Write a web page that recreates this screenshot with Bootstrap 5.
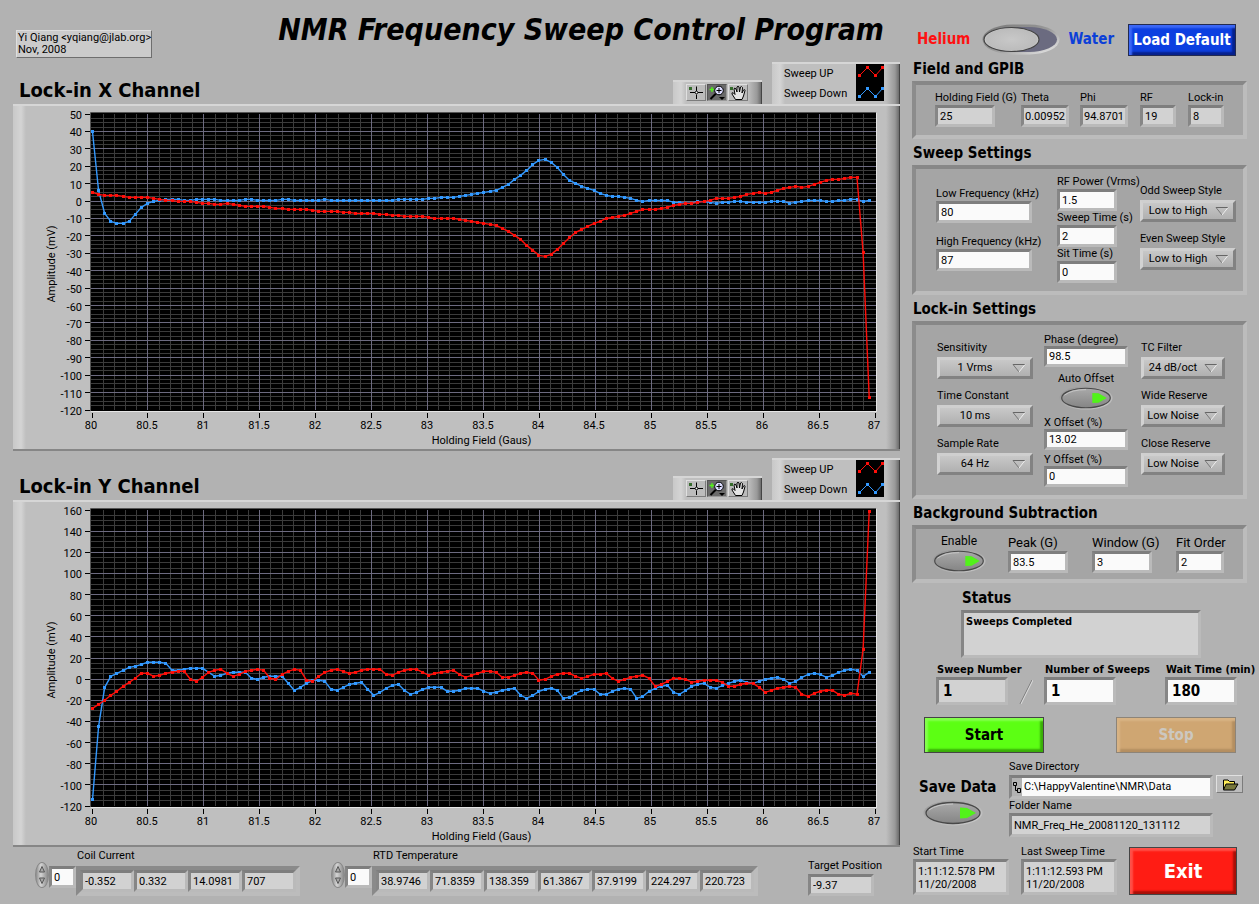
<!DOCTYPE html>
<html lang="en">
<head>
<meta charset="utf-8">
<meta name="viewport" content="width=device-width, initial-scale=1">
<title>NMR Frequency Sweep Control Program</title>
<link href="https://cdn.jsdelivr.net/npm/bootstrap@5.3.0/dist/css/bootstrap.min.css" rel="stylesheet">
<style>
:root{--face:#b2b2b2;--well:#a5a5a5;--read:#d2d2d2;--lite:#bababa;--ui:Roboto,"Liberation Sans",sans-serif;--strong:"DejaVu Sans Condensed","DejaVu Sans",sans-serif}
body{background:var(--face);color:#000;font:11px/14px var(--ui)}
label,.cap{display:block;line-height:14px;white-space:nowrap}
h1,h2,h3{font-family:var(--strong);font-weight:700;margin:0;white-space:nowrap}
h1{font-size:30px;font-style:italic;line-height:36px}
h2{font-size:20px;line-height:28px;padding-left:6px}
h3{font-size:15px;line-height:20px;padding:4px 0 2px 1px}
.strong{font-family:var(--strong);font-weight:700}
.strong15{font-size:15px;line-height:20px}
.left-pane{padding:0 12px 0 13px}
.side{flex:0 0 347px}
.author{border:1px solid;border-color:#dedede #6e6e6e #6e6e6e #dedede;background:#cbcbcb;line-height:12px;padding:1px 0 1px 1px;margin:30px 0 0 3px;white-space:nowrap}

/* recessed controls and indicators */
.sunk{display:block;border:3px solid;border-color:#7e7e7e var(--lite) var(--lite) #868686;background:#fafafa;color:#000;font:11px/14px var(--ui);padding:0 2px;height:22px;border-radius:0;outline:0}
.sunk[readonly],.readout{background:var(--read)}
.big{font:700 15px/20px var(--strong);height:28px;padding:0 4px}
.well{border:4px solid;border-color:#878787 #bcbcbc #bcbcbc #8c8c8c;background:var(--well);margin-right:12px}
.w36{width:36px}.w48{width:48px}.w60{width:60px}.w72{width:72px}.w84{width:84px}.w96{width:96px}
.drop{display:block;appearance:none;border:3px solid;border-color:#cfcfcf #828282 #828282 #d2d2d2;border-radius:0;height:22px;margin-top:2px;font:11px/14px var(--ui);padding:0 20px 0 0;text-align:center;text-align-last:center;color:#000;
 background:url("data:image/svg+xml,%3Csvg xmlns='http://www.w3.org/2000/svg' width='14' height='10'%3E%3Cpath d='M1 1.5H13' stroke='%23666'/%3E%3Cpath d='M1 1.5L7 9' stroke='%23777' fill='none'/%3E%3Cpath d='M13 1.5L7 9' stroke='%23eee' fill='none'/%3E%3C/svg%3E") right 4px center no-repeat,linear-gradient(#c8c8c8,#b0b0b0)}
.led{appearance:none;display:block;width:60px;height:28px;margin:0;
 background:url("data:image/svg+xml,%3Csvg xmlns='http://www.w3.org/2000/svg' viewBox='0 0 60 28' preserveAspectRatio='none'%3E%3Cdefs%3E%3ClinearGradient id='g' x1='0' y1='0' x2='1' y2='1'%3E%3Cstop offset='0' stop-color='%23888'/%3E%3Cstop offset='1' stop-color='%23ddd'/%3E%3C/linearGradient%3E%3ClinearGradient id='f' x1='0' y1='0' x2='0' y2='1'%3E%3Cstop offset='0' stop-color='%23a9a9a9'/%3E%3Cstop offset='1' stop-color='%23858585'/%3E%3C/linearGradient%3E%3C/defs%3E%3Cellipse cx='30' cy='14' rx='29.5' ry='12.5' fill='url(%23g)' opacity='.65'/%3E%3Cellipse cx='30' cy='14' rx='27' ry='10.5' fill='url(%23f)' stroke='%23484848' stroke-width='1.3'/%3E%3Cpath d='M6 11Q14 5 30 5' fill='none' stroke='%23c8c8c8'/%3E%3Cpath d='M37 8.500L44 9L53 14L44 19L37 19.500Z' fill='%2352f21a'/%3E%3C/svg%3E") center/100% 100% no-repeat}
.led-sm{width:54px;height:26px}
.gas{appearance:none;display:block;width:78px;height:32px;margin:0 8px 0 12px;
 background:url("data:image/svg+xml,%3Csvg xmlns='http://www.w3.org/2000/svg' width='78' height='32'%3E%3Cdefs%3E%3ClinearGradient id='r' x1='0' y1='0' x2='1' y2='1'%3E%3Cstop offset='0' stop-color='%23777'/%3E%3Cstop offset='.5' stop-color='%23999'/%3E%3Cstop offset='1' stop-color='%23f0f0f0'/%3E%3C/linearGradient%3E%3CradialGradient id='k' cx='.5' cy='.5' r='.6'%3E%3Cstop offset='0' stop-color='%23c8c8c8'/%3E%3Cstop offset='.75' stop-color='%23bcbcbc'/%3E%3Cstop offset='1' stop-color='%23eee'/%3E%3C/radialGradient%3E%3C/defs%3E%3Crect x='.5' y='.5' width='77' height='30' rx='30' ry='15' fill='url(%23r)'/%3E%3Crect x='3' y='3' width='72' height='25' rx='28' ry='12.5' fill='%236b6b80'/%3E%3Cellipse cx='29.500' cy='15.500' rx='27.500' ry='12' fill='url(%23k)' stroke='%23444' stroke-width='1.200'/%3E%3C/svg%3E") no-repeat}
.push{border:1px solid #444;border-radius:0;font:700 15px/20px var(--strong);width:120px;height:36px;padding:0;white-space:nowrap}
.push-blue{width:108px;height:32px;color:#fff;border-color:#222a50;background:#0c3fe0;box-shadow:inset 3px 3px 2px #3c68f6,inset -3px -3px 2px #06208c}
.push-green{background:#5cff13;box-shadow:inset 3px 3px 2px #84ff4c,inset -3px -3px 2px #3aae08}
.push-tan,.push-tan:disabled{color:#ccc8c0;border-color:#8d8478;background:#cfa672;opacity:1;box-shadow:inset 3px 3px 2px #d8b384,inset -3px -3px 2px #b48e60}
.push-red{width:108px;height:48px;font-size:20px;color:#fff;background:#ff1c14;margin-top:2px;box-shadow:inset 3px 3px 2px #ff5048,inset -3px -3px 2px #a81008}

/* raised plates: graphs, legends, tool palettes */
.plate{border-top:2px solid #d6d6d6;border-bottom:2px solid #868686;background:linear-gradient(90deg,#c8c8c8,#d4d4d4 8px,#bfbfbf 13px,#bfbfbf calc(100% - 14px),#999 calc(100% - 5px),#6c6c6c calc(100% - 1px),#444 calc(100% - 1px))}
.tab{border-bottom:0}
.graph{height:347px}
.graph svg{display:block;width:100%;height:343px}
.chan{margin-bottom:7px}
.chan:last-of-type{margin-bottom:0}
.palette{width:89px;height:24px;padding:2px 0 0 13px;margin-right:10px;gap:1px}
.legend{width:128px;height:42px;padding:0 16px 0 12px;justify-content:space-between}
.legend .names{line-height:20px}
.keys{background:#000}
.tool{width:20px;height:17px;padding:0;border:1px solid;border-color:#e0e0e0 #7c7c7c #7c7c7c #e0e0e0;background:#bcbcbc;border-radius:0;display:block}
.tool svg{display:block;width:18px;height:15px}
.tool-on{background:#6a6a6a;border-color:#555 #999 #999 #555}

/* indexed arrays under the graphs */
.array-row{padding:2px 0 0 22px}
.bank{margin-right:31px}
.bank .cap{padding-left:1px;margin-bottom:3px}
.cells{border:4px solid;border-color:#8a8a8a #bcbcbc #bcbcbc #8a8a8a;background:#aaa}
.cells .sunk{width:54px}
.idx{width:27px;margin-top:17px}
.spin{width:14px;height:26px;margin-top:13px;border-radius:50%;background:linear-gradient(90deg,#8c8c8c,#d4d4d4 40%,#888);border:1px solid #888}
.spin button{display:block;width:12px;height:12px;border:0;padding:0;background:none}
.spin svg{display:block;margin:auto}
.target{padding:10px 18px 0 0}
.target .sunk{width:66px;margin-top:1px}

/* control column */
.top-row{padding:24px 23px 0 5px;height:55px}
.top-row .strong15{line-height:30px}
.text-helium{color:#ff1010}
.text-water{color:#0b3fd8}
.field-grid{display:grid;grid-template-columns:86px 59px 60px 48px 40px;padding:6px 0 0 19px;height:58px}
.tightpad{padding:0 1px}
.sweep-grid{display:grid;grid-template-columns:121px 83px 96px;padding-left:20px;height:130px}
.col-a{padding-top:18px;gap:12px}
.col-b{padding-top:6px}
.col-c{padding-top:15px;gap:10px}
.lock-grid{display:grid;grid-template-columns:107px 97px 84px;padding-left:21px;height:178px}
.stack{padding-top:16px;gap:10px}
.lock-mid{padding-top:9px}
.lock-mid label{line-height:12px}
.lock-mid .sunk{height:21px}
.auto{width:84px;padding:6px 0}
.auto label{text-align:center}
.auto .led{margin:0 auto}
.back-grid{display:grid;grid-template-columns:76px 84px 84px 48px;padding:6px 0 0 16px;height:58px}
.back-grid label{line-height:16px;font-size:13px}
.back-grid .enable{font-size:12px;width:54px;text-align:center;line-height:13px}
.status{padding:1px 0 0 49px}
.status-box{width:240px;height:48px;padding-top:2px;font-family:var(--strong);font-weight:700}
.counts{display:grid;grid-template-columns:83px 25px 121px 90px;padding:5px 0 0 24px}
.counts label{padding-left:1px}
.run-row{padding:12px 0 7px 12px;gap:72px}
.save-left{width:97px;padding:17px 0 0 7px}
.save-left .led{margin:2px 0 0 4px}
.save-dir{margin-bottom:1px}
.path{width:204px;height:24px;margin-right:3px}
.path input{border:0;font:inherit;flex:1 1 auto;min-width:0;padding:0 2px;background:#fafafa;align-self:stretch;outline:0}
.path-box{background:var(--face);padding:0}
.browse{width:27px;height:18px}
.browse svg{margin:auto}
.time-row{padding:8px 0 0 1px;gap:12px}
.stamp{width:96px;height:36px;line-height:13px;padding-top:3px}
</style>
</head>
<body>
<svg width="0" height="0" class="position-absolute" aria-hidden="true">
  <symbol id="cross" viewBox="0 0 18 15"><rect x="2" y="2" width="3" height="3" fill="#356b2c"/><path d="M9.500 1.500V6M9.500 9.500V14M3 7.500H8M11 7.500H16" stroke="#000"/><circle cx="9.500" cy="7.500" r="1.300" fill="#fff" stroke="#000"/></symbol>
  <symbol id="lens" viewBox="0 0 18 15"><path d="M1.500 4.500H6.500M4 2V7" stroke="#52f21a" stroke-width="1.300"/><path d="M8 8.500L2.500 14" stroke="#000" stroke-width="2"/><circle cx="11" cy="5.500" r="4.300" fill="#dcdcff" stroke="#000"/><path d="M8.500 5.500H13.500M11 3V8" stroke="#000"/><path d="M11 12H17L14 15Z" fill="#000"/></symbol>
  <symbol id="hand" viewBox="0 0 18 15"><rect x="1" y="2" width="3" height="3" fill="#356b2c"/><path d="M6.500 14.500L3 9Q2.500 7 4.500 8L6 9.500L5 4Q5.500 2 7 4L8 7L8 2Q9 .5 10 2L10.500 7L11.500 2Q12.500 1 13.500 2.500L13 8L14.500 5Q16 4 16 5.500L14.500 11L13 14.500Z" fill="#e4e4e4" stroke="#000"/></symbol>
  <symbol id="folder" viewBox="0 0 18 14"><path d="M2.500 12V2.500H7L8.500 4H13.500V6.500" fill="#ffee58" stroke="#000"/><path d="M2.500 12.500L5 6.500H17L13.500 12.500Z" fill="#77773c" stroke="#000"/></symbol>
</svg>

<div class="d-flex align-items-start">
  <main class="flex-grow-1 left-pane">
    <header class="d-flex justify-content-between align-items-start" style="height:62px">
      <div class="author">Yi Qiang &lt;yqiang@jlab.org&gt;<br>Nov, 2008</div>
      <h1 class="pt-2 mt-1 pe-3">NMR Frequency Sweep Control Program</h1>
    </header>

    <section class="chan" data-channel="x">
      <div class="d-flex align-items-end">
        <h2 class="flex-grow-1">Lock-in X Channel</h2>
        <div class="plate tab palette d-flex"></div>
        <div class="plate tab legend d-flex"></div>
      </div>
      <div class="plate graph"><svg role="img" aria-label="Lock-in X amplitude"></svg></div>
    </section>
    <section class="chan" data-channel="y">
      <div class="d-flex align-items-end">
        <h2 class="flex-grow-1">Lock-in Y Channel</h2>
        <div class="plate tab palette d-flex"></div>
        <div class="plate tab legend d-flex"></div>
      </div>
      <div class="plate graph"><svg role="img" aria-label="Lock-in Y amplitude"></svg></div>
    </section>

    <footer class="d-flex array-row">
      <div class="d-flex bank" data-name="Coil Current" data-values="-0.352 0.332 14.0981 707"></div>
      <div class="d-flex bank" data-name="RTD Temperature" data-values="38.9746 71.8359 138.359 61.3867 37.9199 224.297 220.723"></div>
      <div class="ms-auto target"><label for="tp">Target Position</label><input id="tp" class="sunk" readonly value="-9.37"></div>
    </footer>
  </main>

  <aside class="side">
    <div class="d-flex top-row">
      <label class="strong strong15 text-helium" for="gas">Helium</label>
      <input type="checkbox" role="switch" id="gas" class="gas">
      <span class="strong strong15 text-water">Water</span>
      <button class="push push-blue ms-auto">Load Default</button>
    </div>

    <h3>Field and GPIB</h3>
    <div class="well field-grid">
      <div><label for="hf">Holding Field (G)</label><input id="hf" class="sunk w60" readonly value="25"></div>
      <div><label for="th">Theta</label><input id="th" class="sunk w48 tightpad" readonly value="0.00952"></div>
      <div><label for="ph">Phi</label><input id="ph" class="sunk w48 tightpad" readonly value="94.8701"></div>
      <div><label for="rf">RF</label><input id="rf" class="sunk w36" readonly value="19"></div>
      <div><label for="li">Lock-in</label><input id="li" class="sunk w36" readonly value="8"></div>
    </div>

    <h3>Sweep Settings</h3>
    <div class="well sweep-grid">
      <div class="d-flex flex-column col-a">
        <div><label for="lf">Low Frequency (kHz)</label><input id="lf" class="sunk w96" value="80"></div>
        <div><label for="hi">High Frequency (kHz)</label><input id="hi" class="sunk w96" value="87"></div>
      </div>
      <div class="col-b">
        <label for="rp">RF Power (Vrms)</label><input id="rp" class="sunk w60" value="1.5">
        <label for="st">Sweep Time (s)</label><input id="st" class="sunk w60" value="2">
        <label for="si">Sit Time (s)</label><input id="si" class="sunk w60" value="0">
      </div>
      <div class="d-flex flex-column col-c">
        <div><label for="od">Odd Sweep Style</label><select id="od" class="drop w96"><option>Low to High</option></select></div>
        <div><label for="ev">Even Sweep Style</label><select id="ev" class="drop w96"><option>Low to High</option></select></div>
      </div>
    </div>

    <h3>Lock-in Settings</h3>
    <div class="well lock-grid">
      <div class="d-flex flex-column stack">
        <div><label for="se">Sensitivity</label><select id="se" class="drop w96"><option>1 Vrms</option></select></div>
        <div><label for="tc">Time Constant</label><select id="tc" class="drop w96"><option>10 ms</option></select></div>
        <div><label for="sr">Sample Rate</label><select id="sr" class="drop w96"><option>64 Hz</option></select></div>
      </div>
      <div class="lock-mid">
        <label for="pd">Phase (degree)</label><input id="pd" class="sunk w84" value="98.5">
        <div class="auto"><label for="ao">Auto Offset</label><input type="checkbox" id="ao" class="led led-sm" checked></div>
        <label for="xo">X Offset (%)</label><input id="xo" class="sunk w84" value="13.02">
        <label for="yo" class="mt-1">Y Offset (%)</label><input id="yo" class="sunk w84" value="0">
      </div>
      <div class="d-flex flex-column stack">
        <div><label for="tf">TC Filter</label><select id="tf" class="drop w84"><option>24 dB/oct</option></select></div>
        <div><label for="wr">Wide Reserve</label><select id="wr" class="drop w84"><option>Low Noise</option></select></div>
        <div><label for="cr">Close Reserve</label><select id="cr" class="drop w84"><option>Low Noise</option></select></div>
      </div>
    </div>

    <h3>Background Subtraction</h3>
    <div class="well back-grid">
      <div><label for="en" class="enable">Enable</label><input type="checkbox" id="en" class="led led-sm" checked></div>
      <div><label for="pk">Peak (G)</label><input id="pk" class="sunk w60" value="83.5"></div>
      <div><label for="wi">Window (G)</label><input id="wi" class="sunk w60" value="3"></div>
      <div><label for="fo">Fit Order</label><input id="fo" class="sunk w48" value="2"></div>
    </div>

    <div class="status">
      <h3>Status</h3>
      <div class="sunk readout status-box">Sweeps Completed</div>
    </div>

    <div class="counts">
      <div><label class="strong" for="sn">Sweep Number</label><input id="sn" class="sunk big w72" readonly value="1"></div>
      <svg width="14" height="28" viewBox="0 0 14 28" class="align-self-end" aria-hidden="true"><path d="M1 27L13 3" stroke="#777"/><path d="M2 27L14 3" stroke="#ddd"/></svg>
      <div><label class="strong" for="ns">Number of Sweeps</label><input id="ns" class="sunk big w72" value="1"></div>
      <div><label class="strong" for="wt">Wait Time (min)</label><input id="wt" class="sunk big w72" value="180"></div>
    </div>

    <div class="d-flex run-row">
      <button class="push push-green">Start</button>
      <button class="push push-tan" disabled>Stop</button>
    </div>

    <div class="d-flex save-row">
      <div class="save-left"><label class="strong strong15" for="sd">Save Data</label><input type="checkbox" id="sd" class="led" checked></div>
      <div>
        <label class="save-dir" for="dir">Save Directory</label>
        <div class="d-flex align-items-start">
          <div class="sunk path path-box d-flex align-items-center">
            <svg width="10" height="16" viewBox="0 0 10 16" aria-hidden="true"><path d="M1.500 3.500H4.500V6.500H1.500ZM3.500 7V11.500H5M5.500 9.500H8.500V13.500H5.500Z" fill="none" stroke="#000"/></svg>
            <input id="dir" value="C:\HappyValentine\NMR\Data">
          </div>
          <button class="tool browse" aria-label="Browse"><svg><use href="#folder"/></svg></button>
        </div>
        <label for="fn">Folder Name</label>
        <input id="fn" class="sunk path" readonly value="NMR_Freq_He_20081120_131112">
      </div>
    </div>

    <div class="d-flex align-items-start time-row">
      <div><div class="cap">Start Time</div><div class="sunk readout stamp">1:11:12.578 PM<br>11/20/2008</div></div>
      <div><div class="cap">Last Sweep Time</div><div class="sunk readout stamp">1:11:12.593 PM<br>11/20/2008</div></div>
      <button class="push push-red">Exit</button>
    </div>
  </aside>
</div>

<script src="https://cdn.jsdelivr.net/npm/bootstrap@5.3.0/dist/js/bootstrap.bundle.min.js"></script>
<script>
const channels = {
  x: { zero: 604.5, gain: 5.224, min: -120, max: 50, major: 10, minor: 2.5,
    down: [395,572,640,664,670,670,664,643,622,610,604,600,598,598,598,601,601,598,598,598,598,601,601,601,601,598,598,601,601,601,601,598,598,601,601,601,601,601,598,601,601,601,601,601,601,601,601,601,601,601,598,598,598,598,598,595,595,592,592,
      592,589,586,583,580,577,574,571,562,553,538,526,511,493,481,478,487,502,523,541,550,559,565,571,580,586,589,589,592,595,601,604,601,601,601,601,607,608,609,609,604,605,607,610,607,607,604,604,607,607,607,607,604,604,604,610,607,604,601,601,601,604,604,601,601,598,598,604,601],
    up: [577,583,586,586,586,589,592,592,592,592,595,598,601,601,604,604,604,607,610,610,613,613,610,613,616,619,619,619,619,622,625,625,628,628,628,628,631,634,634,634,634,637,637,640,640,640,640,643,643,646,646,649,649,649,649,652,655,655,655,
      655,658,661,664,667,670,673,676,685,694,706,718,736,751,766,769,763,748,730,712,697,688,679,670,664,655,652,649,646,640,634,628,628,628,625,622,616,613,610,610,607,604,601,595,595,595,592,589,583,580,577,580,577,571,565,562,559,562,559,553,547,541,538,538,535,532,532,757,1192] },
  y: { zero: 119, gain: 3.171, min: -120, max: 160, major: 20, minor: 5,
    down: [479,259,142,109,100,91,82,79,73,67,67,67,70,91,91,88,85,85,85,97,109,106,100,97,97,97,115,118,112,109,109,109,130,151,142,130,121,121,124,148,151,142,133,130,127,148,166,157,145,136,133,151,163,157,148,142,142,142,154,
      154,151,145,145,145,154,160,157,151,148,145,166,175,166,154,148,145,151,175,172,160,151,148,148,163,163,154,148,145,148,175,169,154,145,139,136,157,163,151,139,133,130,142,145,136,130,124,121,127,130,124,118,115,112,118,130,124,112,103,100,103,112,106,97,91,88,91,109,97],
    up: [205,193,181,166,154,139,127,115,100,100,109,106,100,97,94,94,118,124,112,97,91,88,100,109,103,94,91,88,91,115,118,103,94,88,91,121,124,109,97,91,88,94,100,97,91,88,88,88,103,106,97,91,88,88,97,106,100,97,94,
      91,103,112,106,100,94,94,97,112,112,106,100,97,100,121,118,109,103,100,100,109,115,109,103,103,100,115,124,118,112,109,106,115,139,133,124,115,115,118,127,124,121,121,121,127,139,139,133,130,130,142,157,151,145,142,139,142,163,169,160,154,151,151,163,166,160,163,28,-386] }
};

function draw(svg, c) {
  const W = svg.clientWidth, L = 79, R = W - 25, T = 8, B = 304, px = v => Math.floor(v) + 0.5;
  const X = v => L + (v - 80) / 7 * (R - L), Y = v => B - (v - c.min) / (c.max - c.min) * (B - T);
  let minor = '', major = '', ticks = '', s = '';
  for (let i = 1; i < 70; i++) { const d = `M${px(X(80 + i / 10))} ${T}V${B}`; if (i % 5) minor += d; else major += d; }
  for (let v = c.min, n = 0; v <= c.max; v += c.minor, n++) {
    const d = `M${L - 1} ${px(Y(v))}H${R + 1}`;
    if (n % 4) minor += d;
    else {
      if (v > c.min && v < c.max) major += d;
      ticks += `M${L - 7} ${px(Y(v))}h5`;
      s += `<text x="${L - 10}" y="${Math.round(Y(v)) + 5}" text-anchor="end">${v}</text>`;
    }
  }
  for (let v = 80; v <= 87; v += 0.5) {
    ticks += `M${px(X(v))} ${B + 3}v5`;
    s += `<text x="${Math.round(X(v)) - 1}" y="${B + 19}" text-anchor="middle">${v}</text>`;
  }
  const series = (data, col) => {
    const pts = data.map((r, i) => [X(80 + i * 6.944 / 127) + .5, Y((c.zero - r) / c.gain) + .5]);
    return `<polyline points="${pts.map(p => p.map(n => n.toFixed(1)).join()).join(' ')}" fill="none" stroke="${col}" stroke-width="1.4"/>` +
      `<path d="${pts.map(p => `M${Math.floor(p[0]) - 1} ${Math.floor(p[1]) - 1}h3v3h-3z`).join('')}" fill="${col}" shape-rendering="crispEdges"/>`;
  };
  svg.innerHTML = `<rect x="${L - 1}" y="${T - 1}" width="${R - L + 3}" height="${B - T + 3}" fill="#e6e6e6"/>
    <rect x="${L - 1}" y="${T - 1}" width="${R - L + 2}" height="${B - T + 2}" fill="#000"/>
    <path d="M${L - 1.5} ${B + 1}V${T - 1.5}H${R + 1}" fill="none" stroke="#555"/>
    <path d="${minor}" stroke="#3b3b3b"/><path d="${major}" stroke="#6c6a80"/><path d="${ticks}" stroke="#000"/>
    <g font-size="11">${s}<text x="${(L + R) / 2 - 2}" y="${B + 34}" text-anchor="middle">Holding Field (Gaus)</text>
    <text transform="translate(42 ${(T + B) / 2 + 2}) rotate(-90)" text-anchor="middle">Amplitude (mV)</text></g>
    ${series(c.down, '#3399ff')}${series(c.up, '#ff0f0a')}`;
}

const key = (y, col) => `<path d="M3.5 ${y + 8.5}L11.5 ${y + .5}L19.5 ${y + 8.5}L26.500 ${y + .5}" fill="none" stroke="${col}"/><path d="M2 ${y + 7}h3v3h-3zM10 ${y - 1}h3v3h-3zM18 ${y + 7}h3v3h-3zM25 ${y - 1}h3v3h-3z" fill="${col}"/>`;
document.querySelectorAll('.legend').forEach(e => e.innerHTML = `<div class="names"><div>Sweep UP</div><div>Sweep Down</div></div>
  <svg class="keys" width="28" height="37" aria-hidden="true">${key(3, '#ff0f0a')}${key(24, '#3399ff')}</svg>`);
document.querySelectorAll('.palette').forEach(e => e.innerHTML = [['cross', 'Cursor'], ['lens', 'Zoom'], ['hand', 'Pan']]
  .map(([id, name]) => `<button class="tool${id === 'lens' ? ' tool-on' : ''}" aria-label="${name}"><svg><use href="#${id}"/></svg></button>`).join(''));
document.querySelectorAll('.bank').forEach(e => {
  const cells = e.dataset.values.split(' ').map((v, i) => `<input class="sunk" readonly value="${v}" aria-label="${e.dataset.name} ${i}">`).join('');
  const arrow = d => `<svg width="8" height="8"><path d="${d}" fill="#aaa" stroke="#555"/></svg>`;
  e.innerHTML = `<div class="spin"><button aria-label="Next">${arrow('M1.500 7L4 1.500L6.500 7Z')}</button><button aria-label="Previous">${arrow('M1.500 1L4 6.500L6.500 1Z')}</button></div>
    <input class="sunk idx" value="0" aria-label="${e.dataset.name} index">
    <div><div class="cap">${e.dataset.name}</div><div class="cells d-flex">${cells}</div></div>`;
});
const redraw = () => document.querySelectorAll('.chan').forEach(e => draw(e.querySelector('.graph svg'), channels[e.dataset.channel]));
redraw();
addEventListener('resize', redraw);
</script>
</body>
</html>
